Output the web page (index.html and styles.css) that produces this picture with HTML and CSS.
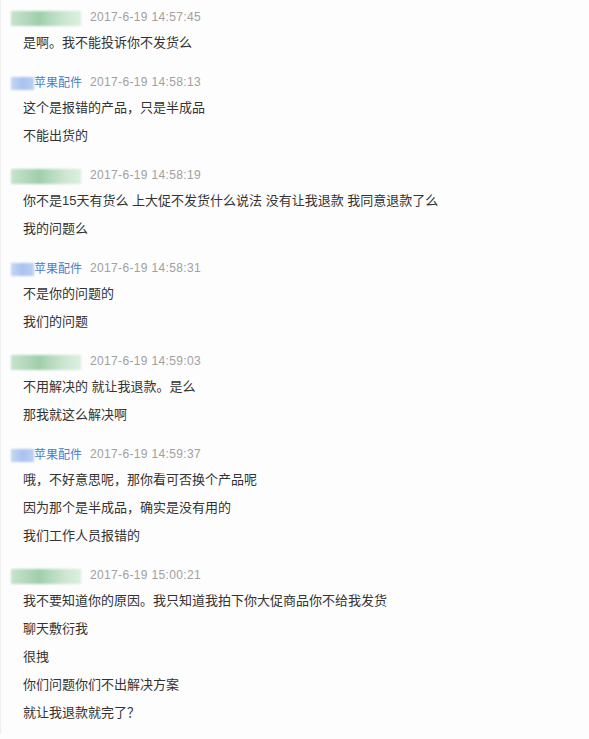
FILE: index.html
```html
<html>
  <head>
    <meta http-equiv="content-type" content="text/html; charset=UTF-8">
    <title>聊天记录</title>
    <link rel="stylesheet" href="styles.css">
  </head>
  <body>
    <div class="chat">
      <div class="msg">
        <div class="head"><span class="name"><i class="mask green"></i></span><span class="time">2017-6-19 14:57:45</span></div>
        <p class="line">是啊。我不能投诉你不发货么</p>
      </div>
      <div class="msg">
        <div class="head"><span class="name"><i class="mask blue"></i><em class="shop">苹果配件</em></span><span class="time">2017-6-19 14:58:13</span></div>
        <p class="line">这个是报错的产品，只是半成品</p>
        <p class="line">不能出货的</p>
      </div>
      <div class="msg">
        <div class="head"><span class="name"><i class="mask green"></i></span><span class="time">2017-6-19 14:58:19</span></div>
        <p class="line">你不是15天有货么 上大促不发货什么说法 没有让我退款 我同意退款了么</p>
        <p class="line">我的问题么</p>
      </div>
      <div class="msg">
        <div class="head"><span class="name"><i class="mask blue"></i><em class="shop">苹果配件</em></span><span class="time">2017-6-19 14:58:31</span></div>
        <p class="line">不是你的问题的</p>
        <p class="line">我们的问题</p>
      </div>
      <div class="msg">
        <div class="head"><span class="name"><i class="mask green"></i></span><span class="time">2017-6-19 14:59:03</span></div>
        <p class="line">不用解决的 就让我退款。是么</p>
        <p class="line">那我就这么解决啊</p>
      </div>
      <div class="msg">
        <div class="head"><span class="name"><i class="mask blue"></i><em class="shop">苹果配件</em></span><span class="time">2017-6-19 14:59:37</span></div>
        <p class="line">哦，不好意思呢，那你看可否换个产品呢</p>
        <p class="line">因为那个是半成品，确实是没有用的</p>
        <p class="line">我们工作人员报错的</p>
      </div>
      <div class="msg">
        <div class="head"><span class="name"><i class="mask green"></i></span><span class="time">2017-6-19 15:00:21</span></div>
        <p class="line">我不要知道你的原因。我只知道我拍下你大促商品你不给我发货</p>
        <p class="line">聊天敷衍我</p>
        <p class="line">很拽</p>
        <p class="line">你们问题你们不出解决方案</p>
        <p class="line">就让我退款就完了？</p>
      </div>
    </div>
  </body>
</html>
```

FILE: styles.css
```css
body { margin:0; background:#fdfdfd; font-family:"Liberation Sans", "Noto Sans CJK SC", sans-serif; color:#333333; }
.chat { padding:5px 0 0 10px; border-left:1px solid #f0f0f0; min-height:734px; box-sizing:border-box; }
.msg { margin-bottom:13px; }
.head { display:flex; align-items:center; height:24px; }
.name { display:flex; align-items:center; width:71px; height:24px; }
.mask { display:block; height:15px; margin-top:2px; filter:blur(0.8px); }
.mask.green { width:70px; background:linear-gradient(90deg, #c6e3cc 0%, #b4d9bc 20%, #9fcfaa 40%, #b9dcc1 60%, #cfe8d4 80%, #dcefe0 100%); }
.mask.blue { width:23px; height:13px; background:linear-gradient(90deg, #c4d6f4 0%, #a9c2ee 50%, #bccff2 100%); }
.shop { font-style:normal; font-size:12px; color:#4a7dcc; line-height:24px; font-family:"Noto Sans CJK SC", sans-serif; }
.time { margin-left:8px; font-size:12px; letter-spacing:0.35px; color:#a0a0a0; line-height:24px; }
.line { margin:0; padding-left:12px; font-size:13px; line-height:28px; font-family:"Liberation Sans", "Noto Sans CJK SC", sans-serif; }
```
